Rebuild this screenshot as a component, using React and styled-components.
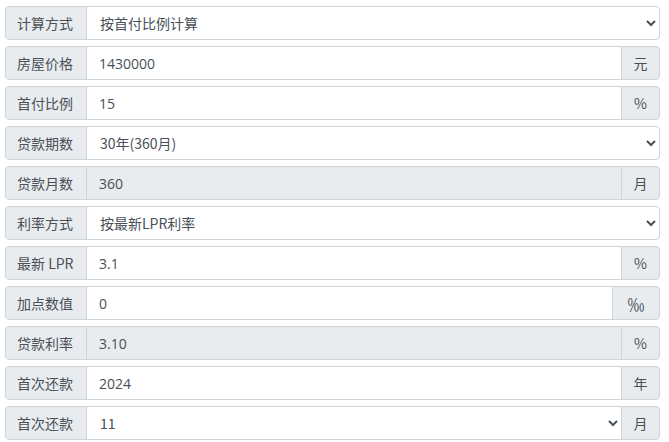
import styled, { createGlobalStyle } from "styled-components";

const GlobalStyle = createGlobalStyle`
body {
  margin: 0;
  background: #fff;
  font-family: "Segoe UI", "Open Sans", "Noto Sans CJK SC", sans-serif;
}
`;

const Form = styled.div`
width: 655px;
padding: 6px 0 0 5px;
`;

const Row = styled.div`
display: flex;
height: 34px;
margin-bottom: 6px;
`;

const Label = styled.span`
flex: none;
box-sizing: border-box;
width: 82px;
display: flex;
align-items: center;
padding: 0 11px;
background: #e9ecef;
border: 1px solid #ced4da;
border-radius: 4px 0 0 4px;
color: #495057;
font-size: 14px;
white-space: nowrap;
font-family: "Noto Sans CJK SC", sans-serif;
`;

const fieldCss = `
flex: 1;
min-width: 0;
box-sizing: border-box;
height: 34px;
margin: 0 0 0 -1px;
border: 1px solid #ced4da;
color: #495057;
font-size: 14px;
font-family: "Open Sans", "Noto Sans CJK SC", sans-serif;
outline: none;
`;

const Input = styled.input`
${fieldCss}
padding: 0 12px;
background: ${(p) => (p.readOnly ? "#e9ecef" : "#fff")};
border-radius: ${(p) => (p.$last ? "0 4px 4px 0" : "0")};
`;

const Select = styled.select`
${fieldCss}
padding: 0 9px;
background: #fff;
border-radius: ${(p) => (p.$last ? "0 4px 4px 0" : "0")};
font-family: "Noto Sans CJK SC", sans-serif;
`;

const Suffix = styled.span`
flex: none;
box-sizing: border-box;
width: ${(p) => (p.$wide ? "48px" : "39px")};
margin-left: -1px;
display: flex;
align-items: center;
justify-content: center;
background: #e9ecef;
border: 1px solid #ced4da;
border-radius: 0 4px 4px 0;
color: #495057;
font-size: ${(p) => (p.$wide ? "17px" : "14px")};
font-family: "Noto Sans CJK SC", sans-serif;
`;

const rows = [
  { label: "计算方式", select: "按首付比例计算" },
  { label: "房屋价格", value: "1430000", unit: "元" },
  { label: "首付比例", value: "15", unit: "%" },
  { label: "贷款期数", select: "30年(360月)" },
  { label: "贷款月数", value: "360", unit: "月", readOnly: true },
  { label: "利率方式", select: "按最新LPR利率" },
  { label: "最新 LPR", value: "3.1", unit: "%" },
  { label: "加点数值", value: "0", unit: "‰", wide: true },
  { label: "贷款利率", value: "3.10", unit: "%", readOnly: true },
  { label: "首次还款", value: "2024", unit: "年" },
  { label: "首次还款", select: "11", unit: "月" },
];

const App = () => {
  return (
    <>
      <GlobalStyle />
      <Form>
        {rows.map((r, idx) => (
          <Row key={idx}>
            <Label>{r.label}</Label>
            {r.select ? (
              <Select $last={!r.unit} defaultValue={r.select}>
                <option>{r.select}</option>
              </Select>
            ) : (
              <Input
                $last={!r.unit}
                defaultValue={r.value}
                readOnly={r.readOnly}
              />
            )}
            {r.unit && <Suffix $wide={r.wide}>{r.unit}</Suffix>}
          </Row>
        ))}
      </Form>
    </>
  );
};

export default App;
